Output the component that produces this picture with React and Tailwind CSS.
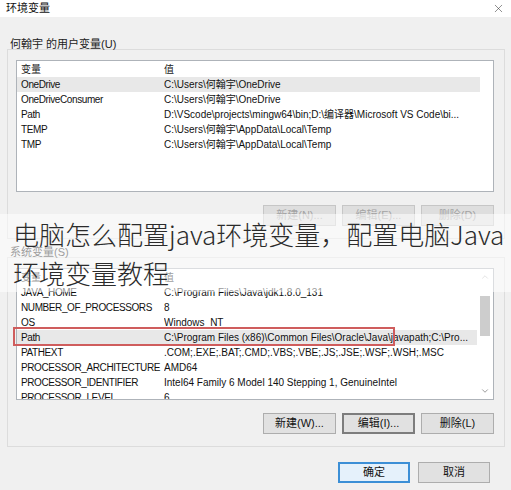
import React from 'react';
import { X, ChevronUp, ChevronDown } from 'lucide-react';

const userVars = [
  { name: 'OneDrive', value: 'C:\\Users\\何翰宇\\OneDrive', active: true },
  { name: 'OneDriveConsumer', value: 'C:\\Users\\何翰宇\\OneDrive' },
  { name: 'Path', value: 'D:\\VScode\\projects\\mingw64\\bin;D:\\编译器\\Microsoft VS Code\\bi...' },
  { name: 'TEMP', value: 'C:\\Users\\何翰宇\\AppData\\Local\\Temp' },
  { name: 'TMP', value: 'C:\\Users\\何翰宇\\AppData\\Local\\Temp' },
];

const systemVars = [
  { name: 'JAVA_HOME', value: 'C:\\Program Files\\Java\\jdk1.8.0_131' },
  { name: 'NUMBER_OF_PROCESSORS', value: '8' },
  { name: 'OS', value: 'Windows_NT' },
  { name: 'Path', value: 'C:\\Program Files (x86)\\Common Files\\Oracle\\Java\\javapath;C:\\Pro...', active: true },
  { name: 'PATHEXT', value: '.COM;.EXE;.BAT;.CMD;.VBS;.VBE;.JS;.JSE;.WSF;.WSH;.MSC' },
  { name: 'PROCESSOR_ARCHITECTURE', value: 'AMD64' },
  { name: 'PROCESSOR_IDENTIFIER', value: 'Intel64 Family 6 Model 140 Stepping 1, GenuineIntel' },
  { name: 'PROCESSOR_LEVEL', value: '6' },
];

const VarRow = ({ item }) => (
  <div className={`flex h-[15px] leading-[15px] w-[463px] ${item.active ? 'bg-[#e8e8e8]' : ''}`}>
    <div className="w-[147px] pl-[4px] whitespace-nowrap overflow-hidden tracking-[-0.4px]">{item.name}</div>
    <div className="flex-1 whitespace-nowrap overflow-hidden">{item.value}</div>
  </div>
);

const DlgButton = ({ children, disabled, focused, primary, className = '' }) => {
  let look = 'bg-[#e1e1e1] border border-[#adadad] text-[#111]';
  if (disabled) look = 'bg-[#dedede] border border-[#c6c6c6] text-[#a3a3a3]';
  if (focused) look = 'bg-[#e1e1e1] border-2 border-[#7d7d7d] text-[#111]';
  if (primary) look = 'bg-[#e5f1fb] border-2 border-[#3c8fd6] text-[#111]';
  return (
    <div className={`h-[21px] flex items-center justify-center text-[11px] ${look} ${className}`}>
      {children}
    </div>
  );
};

const VarList = ({ items, scroll, children }) => (
  <div className="relative ml-[8px] mt-[10px] w-[478px] h-[132px] border border-[#aeb3b9] bg-white">
    <div className="h-[130px] overflow-hidden">
      <div className="flex h-[16px] leading-[16px] pt-[1px] text-[#222]">
        <div className="w-[147px] pl-[4px]">变量</div>
        <div>值</div>
      </div>
      {items.map((item) => (
        <VarRow key={item.name} item={item} />
      ))}
    </div>
    {scroll && (
      <div className="absolute right-0 top-0 w-[16px] h-[130px] flex flex-col items-center bg-white">
        <ChevronUp size={10} strokeWidth={1.5} className="text-[#a0a0a0] mt-[3px]" />
        <div className="w-[10px] h-[40px] bg-[#cdcdcd] mt-[14px]" />
        <div className="flex-1" />
        <ChevronDown size={10} strokeWidth={1.5} className="text-[#606060] mb-[3px]" />
      </div>
    )}
    {children}
  </div>
);

export default function App() {
  return (
    <div
      className="relative w-[511px] h-[490px] overflow-hidden bg-[#f0f0f0] text-[10px] text-[#111]"
      style={{ fontFamily: '"Liberation Sans", "Noto Sans CJK SC", sans-serif' }}
    >
      {/* title bar */}
      <div className="h-[17px] bg-white flex items-center justify-between pl-[6px] pr-[6px]">
        <span className="text-[11px] leading-[17px]">环境变量</span>
        <X size={13} strokeWidth={1} className="text-[#333]" />
      </div>

      {/* user variables */}
      <div className="mt-[21px] ml-[10px] h-[13px] leading-[13px] text-[11px] text-[#222]">何翰宇 的用户变量(U)</div>
      <div className="ml-[7px] -mt-[2px] w-[498px] h-[190px] border border-[#dcdcdc]">
        <VarList items={userVars} />
        <div className="flex justify-end gap-[6px] pr-[10px] mt-[13px]">
          <DlgButton disabled className="w-[73px]">新建(N)...</DlgButton>
          <DlgButton disabled className="w-[73px]">编辑(E)...</DlgButton>
          <DlgButton disabled className="w-[73px]">删除(D)</DlgButton>
        </div>
      </div>

      {/* system variables */}
      <div className="mt-[7px] ml-[10px] h-[13px] leading-[13px] text-[11px] text-[#222]">系统变量(S)</div>
      <div className="ml-[7px] -mt-[2px] w-[498px] h-[190px] border border-[#dcdcdc]">
        <VarList items={systemVars} scroll>
          <div className="absolute left-[-4px] top-[58px] w-[382px] h-[19px] border-2 border-[#cf5d5d]" />
        </VarList>
        <div className="flex justify-end gap-[6px] pr-[10px] mt-[13px]">
          <DlgButton className="w-[73px]">新建(W)...</DlgButton>
          <DlgButton focused className="w-[73px]">编辑(I)...</DlgButton>
          <DlgButton className="w-[73px]">删除(L)</DlgButton>
        </div>
      </div>

      <div className="flex justify-end gap-[8px] pr-[21px] mt-[15px]">
        <DlgButton primary className="w-[72px]">确定</DlgButton>
        <DlgButton className="w-[72px]">取消</DlgButton>
      </div>

      {/* article title overlay */}
      <div
        className="absolute left-0 top-[214px] w-full bg-white/55 pl-[13px] text-[26px] leading-[39px] font-light text-[#2b2b2b]"
        style={{ fontFamily: '"Noto Sans CJK SC", "Noto Sans", sans-serif' }}
      >
        <div className="whitespace-nowrap">电脑怎么配置java环境变量，配置电脑Java</div>
        <div className="whitespace-nowrap">环境变量教程</div>
      </div>
    </div>
  );
}
